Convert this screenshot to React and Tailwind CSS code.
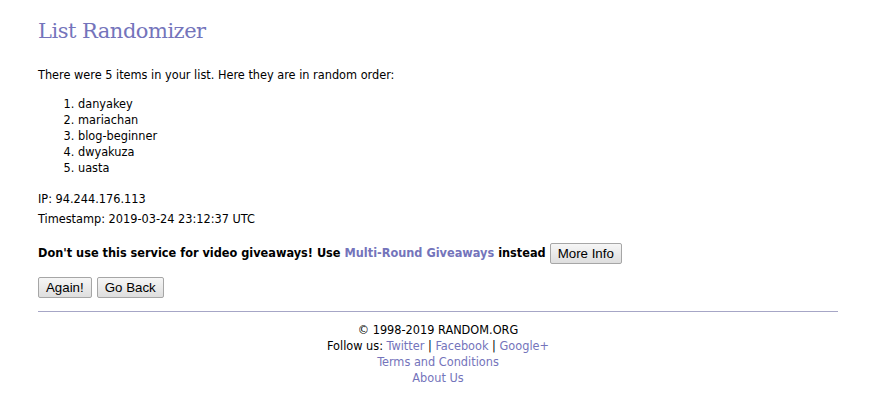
import React from "react";

const items = ["danyakey", "mariachan", "blog-beginner", "dwyakuza", "uasta"];

const btn =
  "h-[21px] px-[7px] border border-[#a6a6a6] rounded-[2px] bg-gradient-to-b from-[#f6f6f6] to-[#dedede] text-[13.3px] leading-none text-black font-['Liberation_Sans',sans-serif]";

export default function App() {
  return (
    <div className="bg-white min-h-[401px] pl-[38px] pr-[42px] text-[12.6px] text-black font-['DejaVu_Sans_Condensed','DejaVu_Sans',sans-serif]">
      {/* Title */}
      <h1 className="pt-[16px] text-[21px] leading-[30px] text-[#7474bb] font-['DejaVu_Serif',serif] tracking-[-0.5px]">
        List Randomizer
      </h1>

      <p className="mt-[21px] leading-[16px]">
        There were 5 items in your list. Here they are in random order:
      </p>

      {/* Random list */}
      <ol className="mt-[13px] pl-[40px] list-decimal leading-[16px]">
        {items.map((item) => (
          <li key={item}>{item}</li>
        ))}
      </ol>

      <p className="mt-[15px] leading-[16px]">IP: 94.244.176.113</p>
      <p className="mt-[4px] leading-[16px]">Timestamp: 2019-03-24 23:12:37 UTC</p>

      <div className="mt-[16px] flex items-center font-bold">
        <span>
          Don't use this service for video giveaways! Use{" "}
          <a className="text-[#7474bb]">Multi-Round Giveaways</a> instead
        </span>
        <button className={`${btn} ml-[4px] font-normal`}>More Info</button>
      </div>

      <div className="mt-[13px] flex gap-[5px]">
        <button className={btn}>Again!</button>
        <button className={btn}>Go Back</button>
      </div>

      <hr className="mt-[13px] border-0 border-t border-[#a6a6c6]" />

      {/* Footer */}
      <div className="mt-[10px] text-center leading-[16px]">
        <div>© 1998-2019 RANDOM.ORG</div>
        <div>
          Follow us: <a className="text-[#7474bb]">Twitter</a> |{" "}
          <a className="text-[#7474bb]">Facebook</a> |{" "}
          <a className="text-[#7474bb]">Google+</a>
        </div>
        <div>
          <a className="text-[#7474bb]">Terms and Conditions</a>
        </div>
        <div>
          <a className="text-[#7474bb]">About Us</a>
        </div>
      </div>
    </div>
  );
}
